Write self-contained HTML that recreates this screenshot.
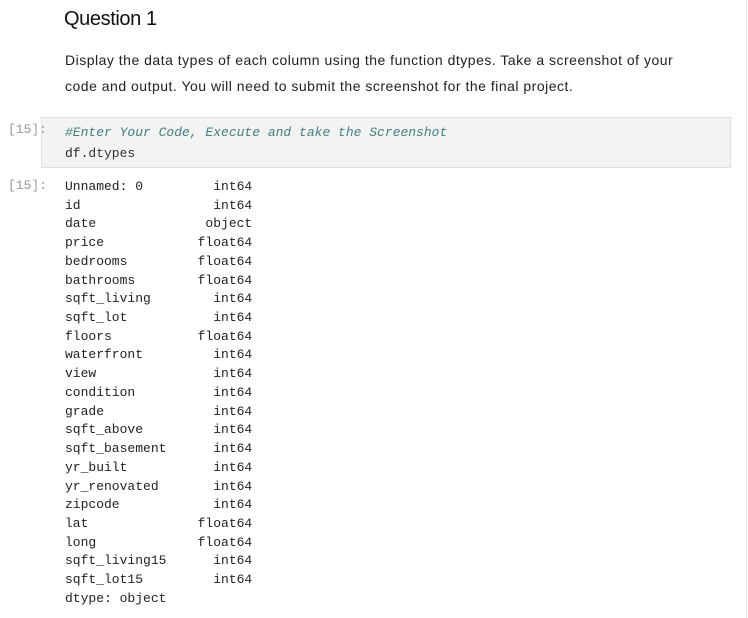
<!DOCTYPE html>
<html><head><meta charset="utf-8"><style>
body{margin:0;width:748px;height:618px;background:#fff;position:relative;overflow:hidden;font-family:"Liberation Sans",sans-serif;}
.vline{position:absolute;left:746px;top:0;width:1px;height:618px;background:#e0e0e0}
h1{position:absolute;left:64px;top:8px;margin:0;font-size:20px;font-weight:normal;color:#111;letter-spacing:-0.4px}
p{position:absolute;left:65px;top:47px;margin:0;font-size:14px;line-height:26px;color:#222;width:680px;letter-spacing:0.5px;white-space:nowrap}
.prompt{position:absolute;left:8px;font-family:"Liberation Mono",monospace;font-size:13px;color:#999;z-index:2}
.box{position:absolute;left:41px;top:117px;width:688px;height:49px;background:#f3f3f3;border:1px solid #dedede}
pre{margin:0;font-family:"Liberation Mono",monospace;font-size:13px;color:#222}
.code{position:absolute;left:65px;top:122px;line-height:21px}
.c{color:#408080;font-style:italic}
.out{position:absolute;left:65px;top:178px;line-height:18.72px}
</style></head><body>
<div class="vline"></div>
<h1>Question 1</h1>
<p>Display the data types of each column using the function dtypes. Take a screenshot of your<br>code and output. You will need to submit the screenshot for the final project.</p>
<div class="box"></div>
<div class="prompt" style="top:122px">[15]:</div>
<pre class="code"><span class="c">#Enter Your Code, Execute and take the Screenshot</span>
df.<span style="color:#333">dtypes</span></pre>
<div class="prompt" style="top:178px">[15]:</div>
<pre class="out">Unnamed: 0         int64
id                 int64
date              object
price            float64
bedrooms         float64
bathrooms        float64
sqft_living        int64
sqft_lot           int64
floors           float64
waterfront         int64
view               int64
condition          int64
grade              int64
sqft_above         int64
sqft_basement      int64
yr_built           int64
yr_renovated       int64
zipcode            int64
lat              float64
long             float64
sqft_living15      int64
sqft_lot15         int64
dtype: object</pre>
</body></html>
